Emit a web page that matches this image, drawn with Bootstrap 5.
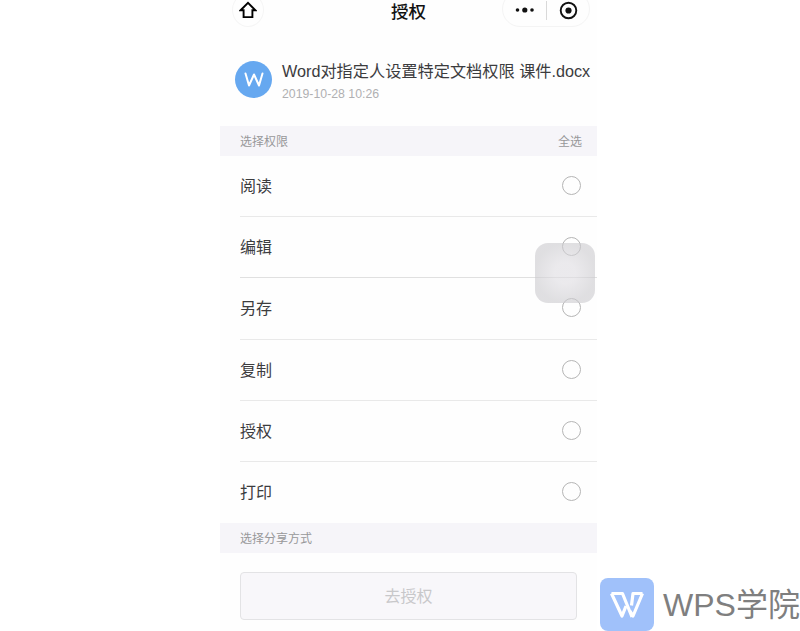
<!DOCTYPE html>
<html lang="zh-CN">
<head>
  <meta charset="UTF-8" />
  <title>授权</title>
  <link href="https://cdn.jsdelivr.net/npm/bootstrap@5.3.0/dist/css/bootstrap.min.css" rel="stylesheet" />
  <style>
    html, body { height: 631px; overflow: hidden; background: #fff; }
    body { font-family: "Liberation Sans", "Noto Sans CJK SC", sans-serif; color: #3a3a3c; position: relative; }
    .phone { width: 377px; height: 631px; margin-left: 220px; overflow: hidden; background: #fefefe; }

    .topbar { height: 27px; padding: 0 7px 0 12px; }
    .homebtn { width: 32px; height: 34px; margin-top: -7px; border: 1px solid #f5f5f5; border-radius: 50%; }
    .topbar-title { font-size: 17.5px; font-weight: 500; color: #111; margin-left: 127px; line-height: 24px; }
    .capsule { width: 88px; height: 36px; margin-top: -9px; border: 1px solid #f4f4f4; border-radius: 18px; padding-top: 9px; padding-left: 12px; }
    .capsule-sep { width: 1px; height: 19px; background: #d9d9d9; margin: 0 12px 0 11px; }

    .docrow { padding: 34px 0 0 15px; height: 99px; }
    .docicon { width: 37px; height: 37px; background: #66a8f0; flex: none; }
    .docinfo { margin-left: 10px; }
    .docname { font-size: 16.2px; line-height: 20px; color: #3c3c3e; white-space: nowrap; }
    .docdate { font-size: 12.3px; line-height: 16px; color: #b0b0b2; margin-top: 5px; }

    .sechead { height: 30px; background: #f6f5f9; padding: 1px 15px 0 20px; font-size: 12px; color: #98989a; }
    .sechead.share { padding-top: 3px; }
    .permrow { height: 61.2px; margin-left: 20px; padding: 2px 16px 0 0; border-bottom: 1px solid #e9e9e9; font-size: 16px; color: #3c3c3e; }
    .permrow.last { border-bottom: 0; height: 61px; }
    .permrow.dark { border-bottom-color: #e0e0e0; }
    .radio-dot { width: 19px; height: 19px; border: 1px solid #b5b5b5; border-radius: 50%; margin-top: -3px; }

    .sharebtn { margin: 19px 20px 0; padding-top: 3px; height: 48px; width: 337px; background: #f8f7fa; border: 1px solid #e3e3e5; border-radius: 4px; font-size: 16px; color: #c8c8ca; }

    .floatbtn { position: absolute; left: 535px; top: 243px; width: 60px; height: 60px; border-radius: 13px; background: radial-gradient(circle at center, rgba(222,220,225,.6) 0, rgba(222,220,225,.6) 25%, rgba(203,202,206,.6) 70%); }
    .wps { position: absolute; left: 600px; top: 578px; }
    .wpslogo { width: 54px; height: 53px; background: #a0c1fa; border-radius: 8px; flex: none; }
    .wpstext { font-size: 32px; line-height: 36px; color: #7f7f7f; margin-left: 9px; white-space: nowrap; }
  </style>
</head>
<body>
  <div class="phone">
    <!-- 顶部导航 -->
    <div class="topbar d-flex align-items-start">
      <div class="homebtn d-flex align-items-center justify-content-center">
        <svg width="18" height="18" viewBox="0 0 18 18" fill="none" stroke="#000" stroke-width="1.9"><path d="M1.600 9.200 9 1.900l7.400 7.300h-3v6.900H4.600V9.200z"/></svg>
      </div>
      <div class="topbar-title">授权</div>
      <div class="capsule d-flex align-items-start ms-auto">
        <svg width="20" height="18" viewBox="0 0 20 18" fill="#111"><circle cx="2.500" cy="9" r="1.800"/><circle cx="9.800" cy="9" r="2.600"/><circle cx="17" cy="9" r="1.800"/></svg>
        <div class="capsule-sep"></div>
        <svg width="19" height="19" viewBox="0 0 19 19" fill="none"><circle cx="9.500" cy="9.500" r="7.800" stroke="#111" stroke-width="1.900"/><circle cx="9.500" cy="9.500" r="3.100" fill="#111"/></svg>
      </div>
    </div>

    <!-- 文档信息 -->
    <div class="docrow d-flex align-items-start">
      <div class="docicon rounded-circle d-flex align-items-center justify-content-center">
        <svg width="20" height="15" viewBox="0 0 20 15" fill="none" stroke="#fff" stroke-width="2" stroke-linecap="round" stroke-linejoin="round"><path d="M1.500 1.500 5 13.500l5-11 5 11 3.500-12"/></svg>
      </div>
      <div class="docinfo">
        <div class="docname">Word对指定人设置特定文档权限 课件.docx</div>
        <div class="docdate">2019-10-28 10:26</div>
      </div>
    </div>

    <div class="sechead d-flex align-items-center justify-content-between">
      <span>选择权限</span><span>全选</span>
    </div>

    <div class="permrow d-flex align-items-center justify-content-between"><span>阅读</span><span class="radio-dot"></span></div>
    <div class="permrow dark d-flex align-items-center justify-content-between"><span>编辑</span><span class="radio-dot"></span></div>
    <div class="permrow d-flex align-items-center justify-content-between"><span>另存</span><span class="radio-dot"></span></div>
    <div class="permrow d-flex align-items-center justify-content-between"><span>复制</span><span class="radio-dot"></span></div>
    <div class="permrow d-flex align-items-center justify-content-between"><span>授权</span><span class="radio-dot"></span></div>
    <div class="permrow last d-flex align-items-center justify-content-between"><span>打印</span><span class="radio-dot"></span></div>

    <div class="sechead share d-flex align-items-center"><span>选择分享方式</span></div>

    <div class="sharebtn d-flex align-items-center justify-content-center">去授权</div>
  </div>

  <!-- 悬浮按钮 -->
  <div class="floatbtn"></div>

  <!-- 水印 -->
  <div class="wps d-flex align-items-center">
    <div class="wpslogo d-flex align-items-center justify-content-center">
      <svg width="36" height="28" viewBox="0 0 36 28" fill="none" stroke="#fff" stroke-width="3.200" stroke-linejoin="round"><path d="M2.500 2.500h11L23 26"/><path d="M2.500 2.500 13 25l4-10"/><path d="M33.500 2.500H24l-1.500 12"/><path d="M33.500 2.500 24 25l-3-5"/></svg>
    </div>
    <div class="wpstext">WPS学院</div>
  </div>
</body>
</html>
